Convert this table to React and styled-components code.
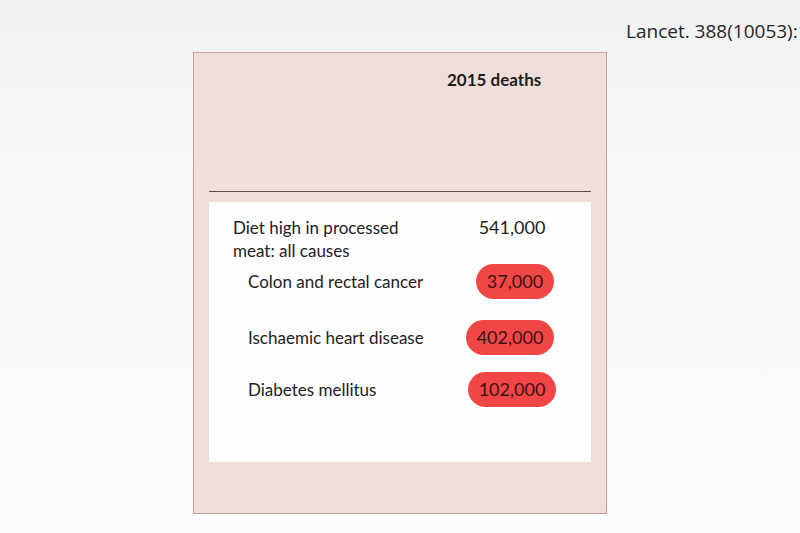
import React from "react";
import styled, { createGlobalStyle } from "styled-components";

const GlobalStyle = createGlobalStyle`
  html, body {
    margin: 0;
    padding: 0;
  }
  body {
    font-family: Lato, "Open Sans", sans-serif;
    color: #222;
  }
`;

const Page = styled.div`
  width: 800px;
  height: 533px;
  overflow: hidden;
  background: linear-gradient(180deg, #f1f2f2 0%, #f9f9f9 40%, #fdfdfd 100%);
  display: flex;
  flex-direction: column;
`;

const Citation = styled.div`
  height: 52px;
  box-sizing: border-box;
  padding: 18px 0 0 626px;
  font-family: "Open Sans", sans-serif;
  font-size: 19px;
  line-height: 26px;
  color: #262626;
  white-space: nowrap;
  overflow: hidden;
`;

const Panel = styled.div`
  margin-left: 193px;
  width: 414px;
  height: 462px;
  box-sizing: border-box;
  background: #f0dedb;
  border: 1px solid #c99aa2;
  padding: 0 15px;
  display: flex;
  flex-direction: column;
`;

const PanelHead = styled.div`
  height: 139px;
  box-sizing: border-box;
  padding: 16px 0 0 238px;
  font-size: 17px;
  font-weight: 700;
  line-height: 22px;
  color: #1e1e1e;
  border-bottom: 1px solid #5a5050;
`;

const Sheet = styled.div`
  margin-top: 10px;
  height: 260px;
  box-sizing: border-box;
  background: #fefefe;
  padding: 14px 29px 0 24px;
  display: flex;
  flex-direction: column;
`;

const Row = styled.div`
  display: grid;
  grid-template-columns: 1fr 100px;
  align-items: ${(p) => (p.$main ? "start" : "center")};
  padding-left: ${(p) => (p.$sub ? "15px" : "0")};
  margin-bottom: ${(p) => p.$gap || 0}px;
`;

const Label = styled.div`
  font-size: 17px;
  line-height: 23px;
  color: #222;
`;

const Value = styled.div`
  justify-self: center;
  font-size: 18px;
  line-height: 23px;
  color: #222;
`;

const Pill = styled.div`
  justify-self: center;
  height: 35px;
  padding: 0 11px;
  border-radius: 18px;
  background: #f24545;
  color: #3a1212;
  font-size: 18px;
  line-height: 35px;
  display: flex;
  align-items: center;
  transform: translateX(${(p) => p.$shift || 0}px);
`;

const causes = [
  { label: "Colon and rectal cancer", value: "37,000", shift: 3, gap: 21 },
  { label: "Ischaemic heart disease", value: "402,000", shift: -2, gap: 17 },
  { label: "Diabetes mellitus", value: "102,000", shift: 0, gap: 0 },
];

export default function App() {
  return (
    <Page>
      <GlobalStyle />
      <Citation>Lancet. 388(10053):1</Citation>
      <Panel>
        <PanelHead>2015 deaths</PanelHead>
        <Sheet>
          <Row $main $gap={2}>
            <Label>
              Diet high in processed
              <br />
              meat: all causes
            </Label>
            <Value>541,000</Value>
          </Row>
          {causes.map((c) => (
            <Row key={c.label} $sub $gap={c.gap}>
              <Label>{c.label}</Label>
              <Pill $shift={c.shift}>{c.value}</Pill>
            </Row>
          ))}
        </Sheet>
      </Panel>
    </Page>
  );
}
